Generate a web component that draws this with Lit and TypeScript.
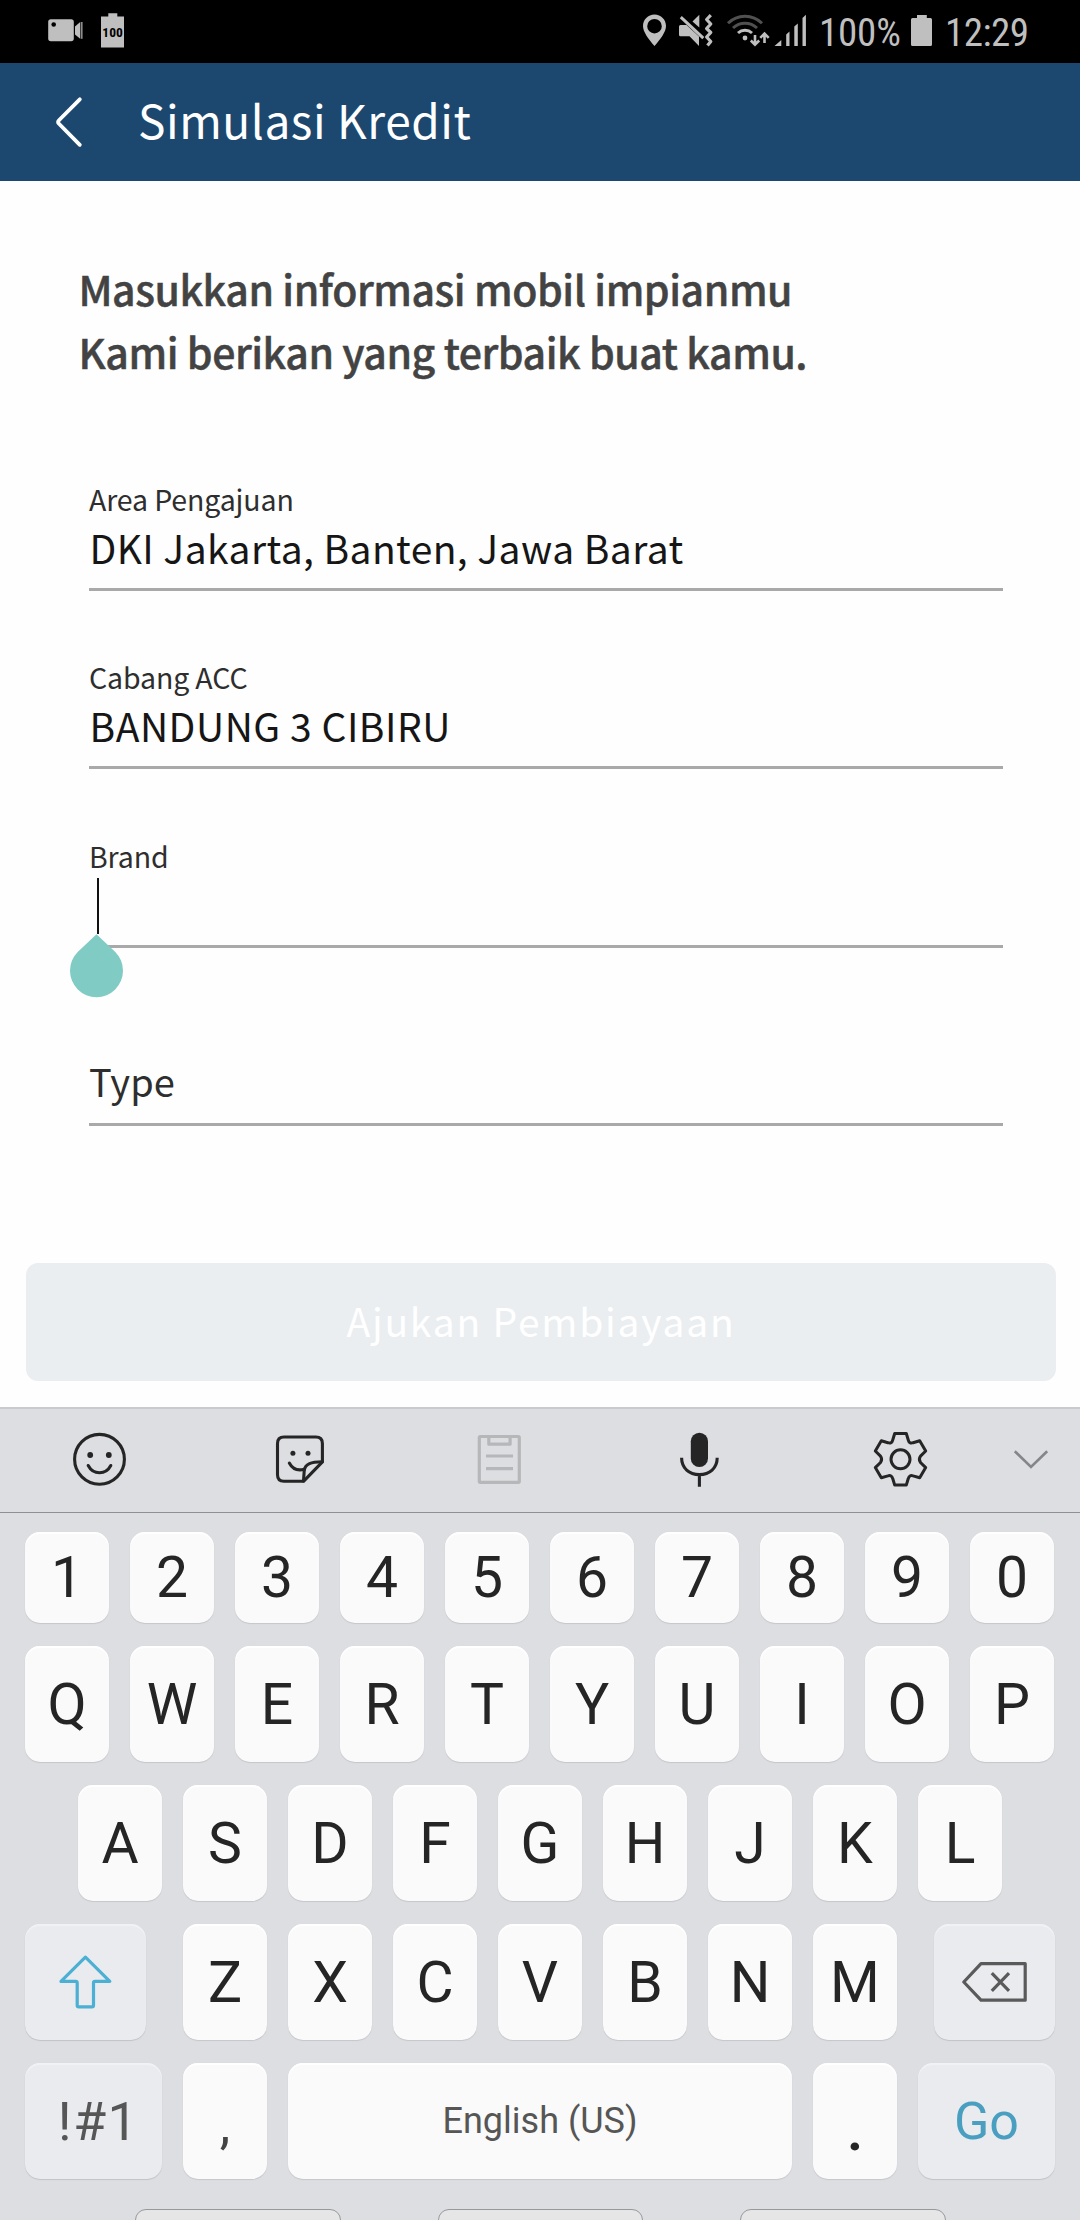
import { LitElement, html, css, svg } from "lit";
import { customElement, property } from "lit/decorators.js";
import { classMap } from "lit/directives/class-map.js";

/* ---------- status bar ---------- */

@customElement("status-bar")
class StatusBar extends LitElement {
  static styles = css`
    :host {
      display: flex;
      justify-content: space-between;
      height: 63px;
      background: #000;
      color: #bfbfbf;
      font-family: "Roboto Condensed", Roboto, sans-serif;
      font-size: 39px;
      line-height: 66px;
    }
    .side { display: flex; }
    .left { padding-left: 46px; }
    .right { padding-right: 51px; }
    svg { display: block; flex: none; }
    .badge { font: 700 13.5px "Roboto Condensed", Roboto, sans-serif; }
    .percent { width: 88px; white-space: nowrap; letter-spacing: -0.2px; }
    .clock { width: 84px; padding-left: 10px; white-space: nowrap; letter-spacing: -0.5px; }
  `;

  render() {
    return html`
      <div class="side left">
        <svg width="40" height="63" viewBox="46 0 40 63">
          <rect x="48.2" y="19.2" width="25.6" height="22" rx="2.6" fill="#bfbfbf" />
          <circle cx="53.7" cy="24.5" r="2.3" fill="#000" />
          <path d="M75 26.4 80.2 22v16.8L75 34.4z" fill="#bfbfbf" />
          <path d="M81.7 22v16.8" stroke="#8c8c8c" stroke-width="1.8" />
        </svg>
        <svg width="50" height="63" viewBox="86 0 50 63">
          <path d="M108.3 13.2h9v3.2h6.7v31.2h-23V16.4h7.3z" fill="#bfbfbf" />
          <text class="badge" x="112.6" y="37" text-anchor="middle" fill="#000">100</text>
        </svg>
      </div>
      <div class="side right">
        <svg width="36" height="63" viewBox="640 0 36 63">
          <path
            fill="#bfbfbf"
            fill-rule="evenodd"
            d="M653.5 14.5c6.5 0 11.5 5.2 11.5 11.5 0 6-5.5 13-11.5 20-6-7-11.5-14-11.5-20 0-6.3 5-11.5 11.5-11.5zm0 4.4a7.3 7.3 0 1 0 0 14.6 7.3 7.3 0 0 0 0-14.6z"
          />
        </svg>
        <svg width="40" height="63" viewBox="676 0 40 63">
          <path d="M678 26.5q0-1.5 1.5-1.5h6l12.5 11.5v9.5l-9.5-9.7h-9q-1.5 0-1.5-1.5z" fill="#bfbfbf" />
          <path d="M691.5 21.5 698.3 14.8v12.7z" fill="#bfbfbf" />
          <path d="M679.8 17.2 702.3 38.2" stroke="#bfbfbf" stroke-width="3" />
          <path
            d="M709.8 15.2 705.6 19.5 709.8 24 705.6 28.5 709.8 32.5 705.6 37 709.8 41.5 706.5 45.6"
            fill="none" stroke="#bfbfbf" stroke-width="3.2" stroke-linejoin="round"
          />
        </svg>
        <svg width="56" height="63" viewBox="716 0 56 63">
          <g fill="none" stroke-width="3">
            <path d="M727 23.2a24 24 0 0 1 34 0" stroke="#505050" />
            <path d="M732 28a17.5 17.5 0 0 1 24 0" stroke="#505050" />
            <path d="M737 33a10.5 10.5 0 0 1 14 0" stroke="#bfbfbf" />
          </g>
          <circle cx="744" cy="38" r="2.4" fill="#bfbfbf" />
          <path
            d="M754 35v9M749.8 40.5 754 44.6 758.2 40.5M763.5 43V34M759.3 37.8 763.5 33.5 767.7 37.8"
            fill="none" stroke="#bfbfbf" stroke-width="2.6"
          />
        </svg>
        <svg width="46" height="63" viewBox="772 0 46 63">
          <path
            fill="#bfbfbf"
            d="M773.5 46 780.3 40v6zM785.2 46V34.5L788.5 31.5V46zM793.3 46V26.5L796.8 23.5V46zM801.5 46V18L804.9 14.8V46z"
          />
        </svg>
        <span class="percent">100%</span>
        <svg width="28" height="63" viewBox="906 0 28 63">
          <path d="M916 15h9.8v3h3.7q1.5 0 1.5 1.5v25q0 1.5-1.5 1.5h-18q-1.5 0-1.5-1.5v-25q0-1.5 1.5-1.5h4.5z" fill="#bfbfbf" />
        </svg>
        <span class="clock">12:29</span>
      </div>
    `;
  }
}

/* ---------- text field ---------- */

@customElement("form-field")
class FormField extends LitElement {
  @property() label = "";
  @property() value = "";
  @property({ type: Boolean }) focused = false;
  @property({ type: Boolean }) wide = false;

  static styles = css`
    :host {
      display: block;
      height: 113px;
      font-family: "Noto Sans CJK SC", "Noto Sans", sans-serif;
    }
    .field {
      position: relative;
      box-sizing: border-box;
      height: 113px;
      border-bottom: 3px solid #a9a9a9;
      display: flex;
      flex-direction: column;
      white-space: nowrap;
    }
    .label {
      height: 42px;
      line-height: 41px;
      font-size: 28.5px;
      letter-spacing: -0.13px;
      color: #2e2e2e;
    }
    .value {
      line-height: 54px;
      padding-left: 0.5px;
      font-size: 39px;
      letter-spacing: 0.42px;
      color: #161616;
    }
    .caps { letter-spacing: 0.53px; }
    .empty {
      padding-top: 42px;
      line-height: 52px;
      font-size: 38px;
      color: #2e2e2e;
    }
    .caret {
      position: absolute;
      left: 8px;
      top: 43px;
      width: 2px;
      height: 56px;
      background: #111;
    }
    .handle {
      position: absolute;
      left: -20px;
      top: 99px;
      display: block;
    }
  `;

  render() {
    if (!this.value && !this.focused) {
      return html`<div class="field"><span class="empty">${this.label}</span></div>`;
    }
    return html`
      <div class="field">
        <span class="label">${this.label}</span>
        <span class=${classMap({ value: true, caps: this.wide })}>${this.value}</span>
        ${this.focused
          ? html`
              <span class="caret"></span>
              <svg class="handle" width="55" height="65" viewBox="0 0 55 65">
                <path d="M27.5 .3 46.3 18A26.5 26.5 0 1 1 8.7 18z" fill="#80cbc4" />
              </svg>
            `
          : null}
      </div>
    `;
  }
}

/* ---------- keyboard ---------- */

const INK = "#252525";

const toolbarIcons = [
  svg`<g fill="none" stroke=${INK} stroke-width="3.1" stroke-linecap="round">
      <circle cx="99.5" cy="1459.3" r="24.9" />
      <path d="M88.2 1465.5c2.6 5 6.7 7.3 11.3 7.3s8.7-2.3 11.3-7.3" />
    </g>
    <circle cx="90.2" cy="1455" r="2.9" fill=${INK} /><circle cx="108.8" cy="1455" r="2.9" fill=${INK} />`,
  svg`<g fill="none" stroke=${INK} stroke-width="3.1" stroke-linejoin="round" stroke-linecap="round">
      <path d="M322.4 1461.8V1443.5q0-6.5-6.5-6.5H284q-6.5 0-6.5 6.5v31.3q0 6.5 6.5 6.5h19.5z" />
      <path d="M322.4 1461.8c-11 .3-17.4 1.500-18.2 9.200l-.7 10" />
      <path d="M289.3 1463c2.5 4.7 6.300 6.900 10.500 6.900q2.500 0 4.400-.7" />
    </g>
    <circle cx="292.9" cy="1453.2" r="2.5" fill=${INK} /><circle cx="308" cy="1453.2" r="2.5" fill=${INK} />`,
  svg`<g fill="none" stroke="#b6b7b9" stroke-width="3.2" stroke-linejoin="round">
      <rect x="479.3" y="1436.5" width="40" height="45.8" rx="1" />
      <path d="M488.8 1437v7.2h21.3V1437M486 1456h27M486 1468.6h27" />
    </g>`,
  svg`<rect x="690.8" y="1432.7" width="17.2" height="34.3" rx="8.6" fill=${INK} />
    <path d="M681.6 1457.8c0 10.3 7.6 16.8 17.8 16.8s17.8-6.5 17.8-16.8M699.4 1475v11.8" fill="none" stroke=${INK} stroke-width="3.1" />`,
  svg`<g fill="none" stroke=${INK} stroke-width="3" stroke-linejoin="round">
      <circle cx="900.5" cy="1459.3" r="9.5" />
      <path transform="translate(900.5 1459.3)" d="M-5.8-25.8H5.8L7.7-19.5Q8.8-15.2 12.6-16.6L19.2-18.5 25.2-8.3 20-3.2Q17.6 0 20 3.2L25.2 8.3 19.2 18.5 12.6 16.6Q8.8 15.2 7.7 19.5L5.8 25.8H-5.8L-7.7 19.5Q-8.8 15.2-12.6 16.6L-19.2 18.5-25.2 8.3-20 3.2Q-17.6 0-20-3.2L-25.2-8.3-19.2-18.5-12.6-16.6Q-8.8-15.2-7.7-19.5Z" />
    </g>`,
  svg`<path d="M1014.8 1451.2 1031 1467 1047.2 1451.2" fill="none" stroke="#858688" stroke-width="2.6" />`,
];

/* [left edge, width] of the slice each toolbar glyph is drawn in */
const toolbarSlots = [[0, 200], [200, 200], [400, 200], [600, 200], [800, 200], [1000, 80]];

@customElement("soft-keyboard")
class SoftKeyboard extends LitElement {
  static styles = css`
    :host {
      display: flex;
      flex-direction: column;
      height: 813px;
      overflow: hidden;
      background: #dddee2;
      font-family: Roboto, sans-serif;
      color: #252525;
    }
    .toolbar {
      box-sizing: border-box;
      height: 106px;
      flex: none;
      display: flex;
      border-top: 2px solid #c9cacb;
      border-bottom: 1px solid #8f9093;
    }
    svg { display: block; flex: none; }
    .rows {
      display: flex;
      flex-direction: column;
      gap: 23px;
      padding: 19px 25px 0;
    }
    .row { display: flex; gap: 21px; height: 116px; }
    .digits { height: 91px; }
    .inset { padding: 0 53px; }
    .spread { justify-content: space-between; }
    .group { display: flex; gap: 21px; }
    .key {
      box-sizing: border-box;
      width: 84px;
      height: 100%;
      flex: none;
      display: flex;
      align-items: center;
      justify-content: center;
      padding-top: 2px;
      border-radius: 15px;
      background: #fafafa;
      box-shadow: inset 0 2px 1px #fff, 0 1px 1px rgba(0, 0, 0, 0.1), 0 0 1px rgba(0, 0, 0, 0.05);
      font-size: 57px;
      line-height: 66px;
      white-space: nowrap;
    }
    .fn {
      background: #e9ebef;
      box-shadow: inset 0 2px 1px #f1f2f4, 0 1px 1px rgba(0, 0, 0, 0.12), 0 0 1px rgba(0, 0, 0, 0.05);
    }
    .digits .key { padding: 0; }
    .narrow { width: 121px; padding: 0; }
    .medium { width: 137px; }
    .symbols { color: #565656; font-size: 53.5px; letter-spacing: 1.5px; padding: 2px 0 0 10px; }
    .go { color: #4a9fc0; font-size: 52px; padding-top: 2px; }
    .space { width: auto; flex: 1; color: #565656; font-size: 36px; padding: 0; }
    .comma { font-size: 53px; color: #444; padding-top: 8px; }
    .dot { font-size: 62px; font-weight: 500; padding-top: 16px; }
    .nav {
      display: flex;
      gap: 97px;
      padding: 30px 0 0 135px;
    }
    .nav span {
      box-sizing: border-box;
      width: 205.5px;
      height: 40px;
      border: 1.5px solid #98999c;
      border-radius: 11px;
      background: #e6e6e7;
    }
  `;

  private keys(chars: string) {
    return [...chars].map((c) => html`<span class="key">${c}</span>`);
  }

  render() {
    return html`
      <div class="toolbar">
        ${toolbarIcons.map(
          (icon, i) => html`
            <svg width=${toolbarSlots[i][1]} height="103" viewBox="${toolbarSlots[i][0]} 1409 ${toolbarSlots[i][1]} 103">
              ${icon}
            </svg>
          `
        )}
      </div>
      <div class="rows">
        <div class="row digits">${this.keys("1234567890")}</div>
        <div class="row">${this.keys("QWERTYUIOP")}</div>
        <div class="row inset">${this.keys("ASDFGHJKL")}</div>
        <div class="row spread">
          <span class="key fn narrow">
            <svg width="121" height="116" viewBox="25 1924 121 116">
              <path
                d="M85.4 1957.2 109.8 1981.4H95Q93.5 1981.4 93.5 1983V2005.2Q93.5 2006.8 92 2006.8H78.8Q77.2 2006.8 77.2 2005.2V1983Q77.2 1981.4 75.7 1981.4H61z"
                fill="none" stroke="#4bb0d3" stroke-width="3.2" stroke-linejoin="round"
              />
            </svg>
          </span>
          <span class="group">${this.keys("ZXCVBNM")}</span>
          <span class="key fn narrow">
            <svg width="121" height="116" viewBox="934 1924 121 116">
              <path
                d="M963.8 1982 981 1963.7H1025.2V2000.2H981zM991.8 1973.2 1009 1990.8M1009 1973.2 991.8 1990.8"
                fill="none" stroke="#5a5a5a" stroke-width="3.2" stroke-linejoin="round"
              />
            </svg>
          </span>
        </div>
        <div class="row">
          <span class="key fn medium symbols">!#1</span>
          <span class="key comma">,</span>
          <span class="key space">English (US)</span>
          <span class="key dot">.</span>
          <span class="key fn medium go">Go</span>
        </div>
      </div>
      <div class="nav"><span></span><span></span><span></span></div>
    `;
  }
}

/* ---------- page ---------- */

@customElement("app-root")
class AppRoot extends LitElement {
  static styles = css`
    :host {
      display: flex;
      flex-direction: column;
      width: 1080px;
      height: 2220px;
      overflow: hidden;
      background: #fefefe;
      font-family: "Noto Sans CJK SC", "Noto Sans", sans-serif;
    }
    status-bar, header, soft-keyboard { flex: none; }
    header {
      display: flex;
      height: 118px;
      background: #1c4870;
      color: #fff;
    }
    header svg { display: block; width: 138px; flex: none; }
    .title { font-size: 46px; line-height: 113px; letter-spacing: 0.55px; white-space: nowrap; }
    main { flex: 1; display: flex; flex-direction: column; }
    .intro {
      padding: 76px 0 0 78.5px;
      font-size: 41px;
      font-weight: 500;
      line-height: 63px;
      letter-spacing: -0.44px;
      -webkit-text-stroke: 0.5px #434343;
      color: #434343;
      white-space: nowrap;
    }
    .fields {
      display: flex;
      flex-direction: column;
      gap: 65.33px;
      padding: 95px 77px 0 89px;
    }
    .submit {
      box-sizing: border-box;
      display: flex;
      align-items: center;
      justify-content: center;
      height: 118px;
      margin: auto 24px 26px 26px;
      padding: 0 0 4px 0;
      border-radius: 12px;
      background: #eaeef1;
      color: #fff;
      font-size: 39px;
      letter-spacing: 1.77px;
    }
  `;

  render() {
    return html`
      <status-bar></status-bar>
      <header>
        <svg width="138" height="118" viewBox="0 63 138 118">
          <path d="M79.8 99.3 59 120.2Q57.3 122 59 123.8L79.8 144.8" fill="none" stroke="#fff" stroke-width="3.8" stroke-linecap="round" />
        </svg>
        <span class="title">Simulasi Kredit</span>
      </header>
      <main>
        <div class="intro">
          <div>Masukkan informasi mobil impianmu</div>
          <div>Kami berikan yang terbaik buat kamu.</div>
        </div>
        <div class="fields">
          <form-field label="Area Pengajuan" value="DKI Jakarta, Banten, Jawa Barat"></form-field>
          <form-field label="Cabang ACC" value="BANDUNG 3 CIBIRU" wide></form-field>
          <form-field label="Brand" focused></form-field>
          <form-field label="Type"></form-field>
        </div>
        <div class="submit">Ajukan Pembiayaan</div>
      </main>
      <soft-keyboard></soft-keyboard>
    `;
  }
}
